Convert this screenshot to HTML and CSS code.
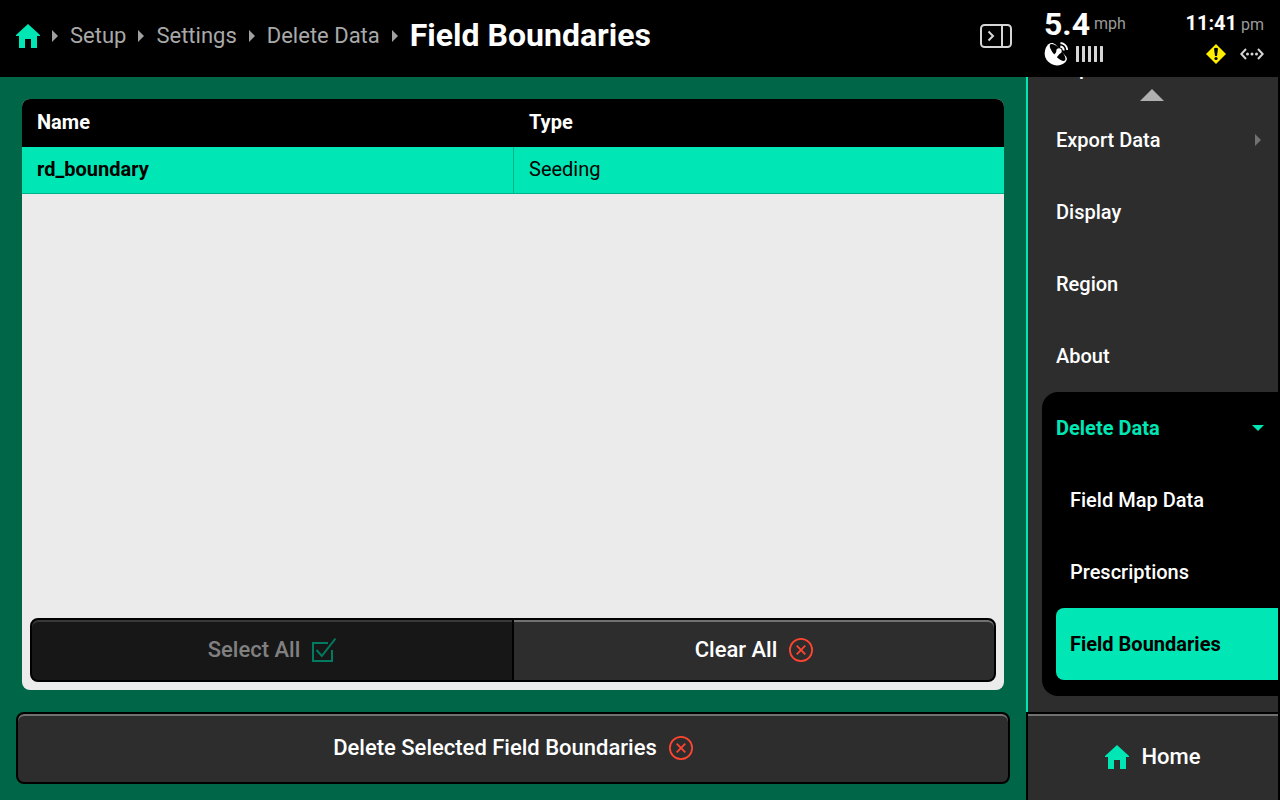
FILE: index.html
```html
<!DOCTYPE html>
<html lang="en">
<head>
<meta charset="utf-8">
<title>Field Boundaries</title>
<link rel="stylesheet" href="styles.css">
</head>
<body>
<svg class="defs" aria-hidden="true">
  <symbol id="house" viewBox="0 0 24 24"><path d="M12 0L24 11V12H21V24H15V15H9V24H3V12H0V11Z"/></symbol>
  <symbol id="right" viewBox="0 0 6 12"><path d="M0 0L6 6L0 12Z"/></symbol>
  <symbol id="cancel" viewBox="0 0 24 24"><circle cx="12" cy="12" r="11.1"/><path d="M7.7 7.7L16.3 16.3M16.3 7.7L7.7 16.3"/></symbol>
</svg>
<header class="topbar">
  <nav class="crumbs" aria-label="Breadcrumb">
    <a href="#" class="crumb-home" aria-label="Home"><svg class="icon"><use href="#house"/></svg></a>
    <svg class="sep"><use href="#right"/></svg>
    <a href="#">Setup</a>
    <svg class="sep"><use href="#right"/></svg>
    <a href="#">Settings</a>
    <svg class="sep"><use href="#right"/></svg>
    <a href="#">Delete Data</a>
    <svg class="sep"><use href="#right"/></svg>
    <h1>Field Boundaries</h1>
  </nav>
  <button class="toggle" type="button" aria-label="Toggle side panel">
    <svg width="32" height="24" viewBox="0 0 32 24"><rect x="1" y="1" width="30" height="22" rx="3.5"/><path d="M22 1V23M8.5 7.5L13 12L8.5 16.5"/></svg>
  </button>
  <div class="status">
    <div class="status-row">
      <div class="speed"><strong>5.4</strong><span>mph</span></div>
      <div class="clock"><strong>11:41</strong><span>pm</span></div>
    </div>
    <div class="status-row">
      <div class="gps">
        <svg width="24" height="24" viewBox="0 0 24 24">
          <path class="fill" d="M4.500 2.200C7 .2 9.500 .8 11.500 2.500L22 14.500C23.500 16.500 23 18 21.500 20A12 12 0 1 1 4.500 2.200Z"/>
          <ellipse cx="13.600" cy="10.400" rx="10.800" ry="4" transform="rotate(48 13.600 10.400)"/>
          <path d="M12 2L23 14V0H12Z"/>
          <path class="fill" d="M8.500 14.800L13.600 7.800L16.600 10.600L11.500 17Z"/>
          <path d="M9.800 9.500L13 8.500L10.800 12Z"/>
          <circle class="fill" cx="15" cy="9" r="2.700"/>
          <path class="line" d="M16.300 4.500A4.200 4.200 0 0 1 19.800 8.500M16.500 1A7.200 7.200 0 0 1 23.200 8"/>
        </svg>
        <svg class="bars" width="27" height="16" viewBox="0 0 27 16"><path d="M1.500 1V15M7.500 1V15M13.500 1V15M19.500 1V15M25.500 1V15"/></svg>
      </div>
      <div class="alerts">
        <svg width="20" height="20" viewBox="0 0 20 20"><path fill="#ffee00" d="M10 0L20 10L10 20L0 10Z"/><path d="M8 4.500Q10 3 12 4.500L11 12H9Z"/><circle cx="10" cy="14.500" r="1.600"/></svg>
        <svg class="link" width="24" height="12" viewBox="0 0 24 12"><path d="M6 1L1.300 6L6 11M18 1L22.700 6L18 11"/><circle cx="7.500" cy="6" r="1.500"/><circle cx="12" cy="6" r="1.500"/><circle cx="16.500" cy="6" r="1.500"/></svg>
      </div>
    </div>
  </div>
</header>
<div class="body">
  <main class="content">
    <section class="panel">
      <table>
        <thead><tr><th scope="col">Name</th><th scope="col">Type</th></tr></thead>
        <tbody><tr><td>rd_boundary</td><td>Seeding</td></tr></tbody>
      </table>
      <div class="pair">
        <button type="button" class="btn" disabled>Select All
          <svg class="icon check" viewBox="0 0 24 24"><path d="M16 4.900H1V23H20V12M4.500 12L9.800 18L23.500 .6"/></svg>
        </button>
        <button type="button" class="btn">Clear All <svg class="icon cancel"><use href="#cancel"/></svg></button>
      </div>
    </section>
    <button type="button" class="btn delete">Delete Selected Field Boundaries <svg class="icon cancel"><use href="#cancel"/></svg></button>
  </main>
  <aside class="side">
    <nav class="menu" aria-label="Settings">
      <a href="#">Import Data</a>
      <a href="#">Export Data <svg class="sep"><use href="#right"/></svg></a>
      <a href="#">Display</a>
      <a href="#">Region</a>
      <a href="#">About</a>
      <div class="group">
        <a href="#" class="open">Delete Data <svg width="12" height="6" viewBox="0 0 12 6"><path d="M0 0H12L6 6Z"/></svg></a>
        <div class="sub">
          <a href="#">Field Map Data</a>
          <a href="#">Prescriptions</a>
          <a href="#" class="current" aria-current="page">Field Boundaries</a>
        </div>
      </div>
      <button type="button" class="scroll-up" aria-label="Scroll up"><svg width="24" height="12" viewBox="0 0 24 12"><path d="M0 12L12 0L24 12Z"/></svg></button>
    </nav>
    <button type="button" class="home"><svg class="icon"><use href="#house"/></svg>Home</button>
  </aside>
</div>
</body>
</html>
```
FILE: styles.css
```css
* { box-sizing: border-box; }
body {
  margin: 0;
  height: 100vh;
  display: flex;
  flex-direction: column;
  background: #000;
  color: #fff;
  font: 500 20px/24px Roboto, sans-serif;
}
a { color: inherit; text-decoration: none; }
button { font: inherit; color: inherit; border: 0; padding: 0; background: none; cursor: pointer; }
svg { display: block; flex: none; }
.defs { position: absolute; width: 0; height: 0; }
.icon { width: 24px; height: 24px; }
.sep { width: 6px; height: 12px; fill: #a0a0a0; }

.topbar { display: flex; align-items: center; height: 77px; padding-left: 16px; }
.crumbs { flex: 1; display: flex; align-items: center; gap: 12px; padding-bottom: 5px; font-size: 22px; font-weight: 400; color: #a9a9a9; }
.crumb-home { fill: #00e6b4; }
.crumbs h1 { margin: 0; font-size: 32px; line-height: 38px; padding-bottom: 2px; font-weight: 700; color: #fff; }
.toggle { margin: 0 14px 5px 0; }
.toggle svg { fill: none; stroke: #d6d6d6; stroke-width: 2; }
.status { width: 254px; padding: 0 16px 3px 18px; display: flex; flex-direction: column; gap: 2px; }
.status-row { display: flex; justify-content: space-between; align-items: center; }
.status-row span { font-size: 16px; font-weight: 400; color: #9a9a9a; margin-left: 4px; }
.status-row strong { font-weight: 700; }
.speed { display: flex; align-items: center; }
.speed strong { font-size: 32px; line-height: 32px; }
.gps, .alerts { display: flex; align-items: center; gap: 8px; }
.gps .fill { fill: #fff; }
.gps .line { fill: none; stroke: #fff; stroke-width: 1.8; }
.gps .bars { stroke: #d6d6d6; stroke-width: 3; stroke-linecap: round; }
.alerts { gap: 14px; }
.link { fill: #d6d6d6; }
.link path { fill: none; stroke: #d6d6d6; stroke-width: 2; }

.body { flex: 1; min-height: 0; display: flex; }
.content { flex: 1; display: flex; flex-direction: column; gap: 22px; padding: 22px 16px 16px; background: #006648; }
.panel { flex: 1; display: flex; flex-direction: column; justify-content: space-between; margin: 0 6px; border-radius: 8px; overflow: hidden; background: #ebebeb; color: #000; }
table { width: 100%; table-layout: fixed; border-spacing: 0; text-align: left; }
th, td { padding: 0 15px; }
th { height: 48px; font-weight: 700; background: #000; color: #fff; padding-bottom: 2px; }
td { height: 47px; background: #00e6b4; border-bottom: 1px solid #00b28b; font-weight: 400; padding-bottom: 2px; }
td:first-child { font-weight: 700; }
th:last-child { padding-left: 16px; }
td:last-child { border-left: 1px solid #00b28b; }

.btn { display: flex; align-items: center; justify-content: center; gap: 12px; font-size: 22px; color: #fff; background: #2d2d2d; border: 2px solid #000; border-radius: 8px; box-shadow: inset 0 2px #717171; }
.pair { display: flex; margin: 8px; }
.pair .btn { flex: 1; height: 64px; }
.pair .btn:first-child { border-radius: 8px 0 0 8px; border-right-width: 1px; }
.pair .btn:last-child { border-radius: 0 8px 8px 0; border-left-width: 1px; }
.btn:disabled { background: #171717; color: #808080; box-shadow: inset 0 2px #393939; }
.check { fill: none; stroke: #007a60; stroke-width: 2; }
.cancel { fill: none; stroke: #ff4530; stroke-width: 1.8; }
.delete { height: 72px; }

.side { width: 254px; display: flex; flex-direction: column; border-right: 2px solid #000; background: #2d2d2d; }
.menu { flex: 1; min-height: 0; position: relative; display: flex; flex-direction: column; justify-content: flex-end; overflow: hidden; padding: 0 0 16px 14px; border-left: 2px solid #00e6b4; }
.menu a { flex: none; height: 72px; padding: 0 14px; display: flex; align-items: center; justify-content: space-between; }
.menu .sep { fill: #717171; margin-right: 3px; }
.group { background: #000; border-radius: 16px 0 0 16px; padding-bottom: 16px; }
.menu .open { color: #00e6b4; fill: #00e6b4; font-weight: 700; }
.sub { padding-left: 14px; }
.menu .current { background: #00e6b4; color: #000; font-weight: 700; border-radius: 8px 0 0 8px; }
.scroll-up { position: absolute; top: 12px; left: 0; right: 2px; display: flex; justify-content: center; fill: #b0b0b0; }
.home { height: 88px; display: flex; align-items: center; justify-content: center; gap: 12px; font-size: 22px; border: solid #000; border-width: 2px 0 0 2px; box-shadow: inset 0 2px #717171; }
.home svg { fill: #00e6b4; }
```
